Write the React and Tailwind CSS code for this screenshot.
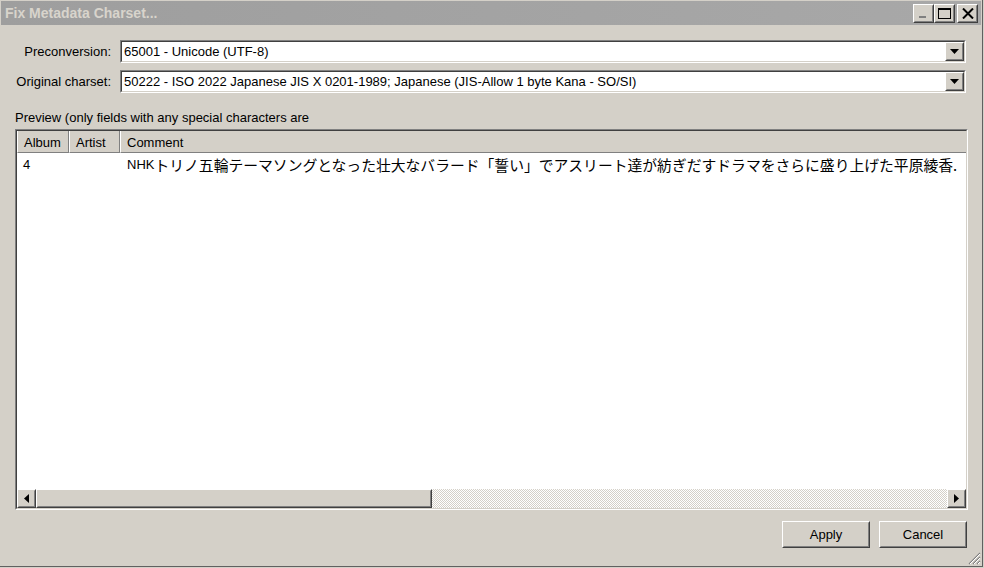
import React from 'react';

// classic 3D frames
const Raised = ({ className = '', children }) => (
    <div className={`border border-t-white border-l-white border-b-[#404040] border-r-[#404040] ${className}`}>
        <div className="w-full h-full border border-t-[#d4d0c8] border-l-[#d4d0c8] border-b-[#808080] border-r-[#808080] bg-[#d4d0c8] flex items-center justify-center">
            {children}
        </div>
    </div>
);

const Sunken = ({ className = '', children }) => (
    <div className={`border border-t-[#808080] border-l-[#808080] border-b-white border-r-white ${className}`}>
        <div className="w-full h-full border border-t-[#404040] border-l-[#404040] border-b-[#d4d0c8] border-r-[#d4d0c8] bg-white flex">
            {children}
        </div>
    </div>
);

const DownArrow = () => (
    <svg width="9" height="5" viewBox="0 0 9 5"><path d="M0 0h9L4.5 5z" fill="#000" /></svg>
);

const Combo = ({ value }) => (
    <Sunken className="flex-1 h-[23px]">
        <div className="flex-1 pl-[2px] leading-[19px] whitespace-nowrap overflow-hidden">{value}</div>
        <Raised className="w-[19px] h-[19px]">
            <DownArrow />
        </Raised>
    </Sunken>
);

const App = () => {
    const comment = 'トリノ五輪テーマソングとなった壮大なバラード「誓い」でアスリート達が紡ぎだすドラマをさらに盛り上げた平原綾香.';

    return (
        <div className="w-[984px] h-[568px] bg-[#d4d0c8] font-['Liberation_Sans','Noto_Sans_CJK_JP',sans-serif] text-[13px] text-black overflow-hidden">
            <div className="w-[983px] h-[567px] flex flex-col border-r border-b border-r-[#606060] border-b-[#606060]">
                {/* Title bar */}
                <div className="mt-[1px] mx-[1px] h-[24px] bg-gradient-to-r from-[#9e9e9e] to-[#a8a8a8] flex items-center pl-[4px] pr-[3px]">
                    <span className="font-bold text-[14px] text-[#d8d4cc]">Fix Metadata Charset...</span>
                    <div className="ml-auto flex items-center">
                        <Raised className="w-[21px] h-[19px]">
                            <div className="w-[7px] h-[2px] bg-[#808080] mt-[8px] -ml-[2px]" />
                        </Raised>
                        <Raised className="w-[21px] h-[19px]">
                            <div className="w-[13px] h-[11px] border border-black border-t-2" />
                        </Raised>
                        <Raised className="w-[21px] h-[19px] ml-[2px]">
                            <svg width="12" height="11" viewBox="0 0 12 11">
                                <path d="M1 0.5L11 10.5M11 0.5L1 10.5" stroke="#000" strokeWidth="2" />
                            </svg>
                        </Raised>
                    </div>
                </div>

                {/* Form */}
                <div className="flex-1 flex flex-col pl-[15px] pr-[14px] pt-[15px]">
                    <div className="grid grid-cols-[96px_1fr] gap-x-[9px] gap-y-[7px] items-center pr-[2px]">
                        <div className="text-right whitespace-nowrap">Preconversion:</div>
                        <div className="flex"><Combo value="65001 - Unicode (UTF-8)" /></div>
                        <div className="text-right whitespace-nowrap">Original charset:</div>
                        <div className="flex"><Combo value="50222 - ISO 2022 Japanese JIS X 0201-1989; Japanese (JIS-Allow 1 byte Kana - SO/SI)" /></div>
                    </div>

                    <div className="mt-[18px] leading-[14px]">Preview (only fields with any special characters are</div>

                    {/* List view */}
                    <div className="mt-[4px] h-[381px] border border-t-[#808080] border-l-[#808080] border-b-white border-r-white">
                        <div className="w-full h-full border border-t-[#404040] border-l-[#404040] border-b-[#d4d0c8] border-r-[#d4d0c8] bg-white flex flex-col">
                            <div className="flex h-[22px] bg-[#d4d0c8]">
                                {['Album', 'Artist'].map((h, i) => (
                                    <div key={h} className={`${i === 0 ? 'w-[52px]' : 'w-[51px]'} border-l border-l-white border-r border-r-[#808080] border-b border-b-[#808080] pl-[6px] pt-[2px] leading-[19px]`}>{h}</div>
                                ))}
                                <div className="flex-1 border-l border-l-white border-b border-b-[#808080] pl-[6px] pt-[2px] leading-[19px]">Comment</div>
                            </div>
                            <div className="flex h-[22px] pt-[2px] items-center whitespace-nowrap">
                                <div className="w-[103px] pl-[6px]">4</div>
                                <div className="flex-1 pl-[7px] overflow-hidden flex items-center">
                                    <span>NHK</span>
                                    <span className="text-[14.8px] font-['Noto_Sans_CJK_JP',sans-serif] leading-[18px]">{comment}</span>
                                </div>
                            </div>
                            <div className="flex-1" />
                            {/* Horizontal scrollbar */}
                            <div className="flex h-[19px]">
                                <Raised className="w-[19px] h-[19px]">
                                    <svg width="5" height="9" viewBox="0 0 5 9"><path d="M5 0v9L0 4.5z" fill="#000" /></svg>
                                </Raised>
                                <Raised className="w-[396px] h-[19px]" />
                                <div className="flex-1 bg-[repeating-conic-gradient(#d4d0c8_0%_25%,#ffffff_0%_50%)] bg-[length:2px_2px]" />
                                <Raised className="w-[19px] h-[19px]">
                                    <svg width="5" height="9" viewBox="0 0 5 9"><path d="M0 0v9L5 4.5z" fill="#000" /></svg>
                                </Raised>
                            </div>
                        </div>
                    </div>

                    {/* Buttons */}
                    <div className="flex justify-end gap-[9px] mt-[11px] pr-[1px]">
                        <Raised className="w-[88px] h-[27px]">Apply</Raised>
                        <Raised className="w-[88px] h-[27px]">Cancel</Raised>
                    </div>
                </div>

                {/* size grip */}
                <div className="flex justify-end pr-[1px] pb-[1px]">
                    <svg width="13" height="13" viewBox="0 0 13 13">
                        <path d="M12 1L1 12M12 5L5 12M12 9L9 12" stroke="#808080" strokeWidth="1.2" />
                        <path d="M12 2L2 12M12 6L6 12M12 10L10 12" stroke="#ffffff" strokeWidth="1" />
                    </svg>
                </div>
            </div>
        </div>
    );
};

export default App;
